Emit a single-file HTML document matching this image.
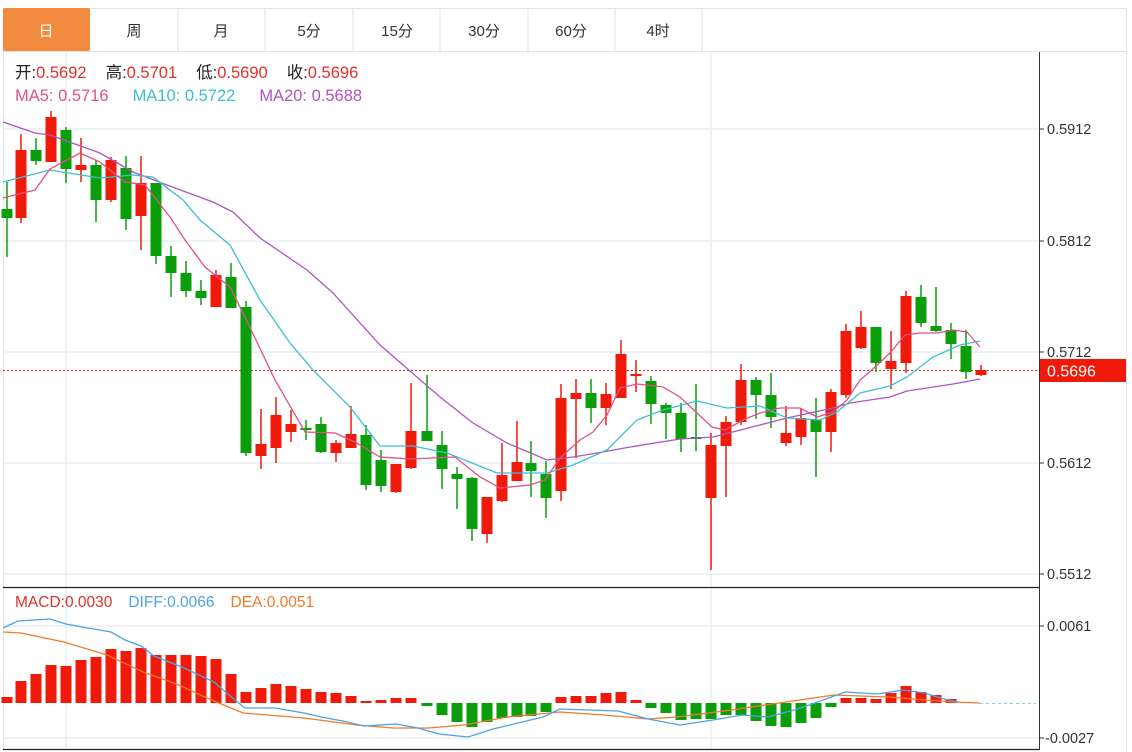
<!DOCTYPE html>
<html><head><meta charset="utf-8"><style>
body{margin:0;width:1132px;height:752px;background:#fff;overflow:hidden;font-family:"Liberation Sans","Noto Sans CJK SC",sans-serif}
svg{position:absolute;left:0;top:0}
</style></head><body>
<svg width="1132" height="752" viewBox="0 0 1132 752" font-family="Liberation Sans, Noto Sans CJK SC, sans-serif">
<rect x="3.5" y="8.5" width="1123" height="43" fill="#fff" stroke="#e2e2e2"/>
<rect x="3" y="8" width="87" height="43" rx="2" fill="#f18a3f"/>
<g stroke="#e2e2e2"><path d="M178 8V51M265 8V51M353 8V51M440 8V51M528 8V51M615 8V51M702 8V51"/></g>
<g font-size="15" text-anchor="middle" fill="#333">
<text x="46" y="36" fill="#fff">日</text><text x="134" y="36">周</text><text x="221" y="36">月</text><text x="309" y="36">5分</text><text x="397" y="36">15分</text><text x="484" y="36">30分</text><text x="571" y="36">60分</text><text x="658" y="36">4时</text>
</g>
<path d="M3.5 51V750M1126.5 51V750" stroke="#e6e6e6"/>
<g stroke="#e6edf2" stroke-width="1.5"><path d="M3 129H1039M3 241H1039M3 352H1039M3 463H1039M3 574H1039M3 626H1039M3 738H1039M66 52V750M711 52V750"/></g>
<path d="M1039.5 52V750" stroke="#333"/>
<path d="M3 587.5H1039M3 749.5H1039" stroke="#222" stroke-width="1.2"/>
<g stroke="#333"><path d="M1039 129H1044M1039 241H1044M1039 352H1044M1039 463H1044M1039 574H1044M1039 626H1044M1039 738H1044"/></g>
<g font-size="14.5" fill="#333"><text x="1047" y="134">0.5912</text><text x="1047" y="246">0.5812</text><text x="1047" y="357">0.5712</text><text x="1047" y="468">0.5612</text><text x="1047" y="579">0.5512</text><text x="1047" y="631">0.0061</text><text x="1045" y="743">-0.0027</text></g>
<g font-size="16.5"><text x="15" y="78"><tspan fill="#222">开:</tspan><tspan fill="#e0322a">0.5692</tspan><tspan fill="#222" dx="19">高:</tspan><tspan fill="#e0322a">0.5701</tspan><tspan fill="#222" dx="19">低:</tspan><tspan fill="#e0322a">0.5690</tspan><tspan fill="#222" dx="19">收:</tspan><tspan fill="#e0322a">0.5696</tspan></text>
<text x="15" y="101"><tspan fill="#e0508a">MA5: 0.5716</tspan><tspan fill="#3bbfd2" dx="24">MA10: 0.5722</tspan><tspan fill="#ad55c0" dx="24">MA20: 0.5688</tspan></text></g>
<g font-size="15.5"><text x="15" y="607"><tspan fill="#e0322a">MACD:0.0030</tspan><tspan fill="#4da2e6" dx="16">DIFF:0.0066</tspan><tspan fill="#f07a2a" dx="16">DEA:0.0051</tspan></text></g>
<path d="M3 370.5H1039" stroke="#e02020" stroke-dasharray="2 2"/>
<rect x="1040" y="359" width="86" height="23" fill="#f01a0a"/>
<text x="1047" y="376.5" font-size="16" fill="#fff">0.5696</text>
<g stroke="#f01a0a" stroke-width="1.5"><path d="M21 134V223M51 111V162M81 138V182M111 157V202M141 156V250M216 270V307M261 409V469M276 397V463M291 410V442M336 440V462M351 406V448M396 464V493M411 383V469M487 497V543M502 443V502M517 421V481M561 384V501M576 379V458M606 383V425M621 340V398M636 360V392M711 433V570M726 416V497M741 364V425M786 406V446M801 409V445M831 389V452M846 324V398M861 311V349M891 331V389M906 291V373M981 365V376"/></g>
<g fill="#f01a0a">
<rect x="15.5" y="150" width="11" height="68"/><rect x="45.5" y="117" width="11" height="45"/><rect x="75.5" y="165" width="11" height="5"/><rect x="105.5" y="160" width="11" height="40"/><rect x="135.5" y="183" width="11" height="33"/><rect x="210.5" y="275" width="11" height="32"/><rect x="255.5" y="444" width="11" height="12"/><rect x="270.5" y="415" width="11" height="33"/><rect x="285.5" y="424" width="11" height="8"/><rect x="330.5" y="443" width="11" height="10"/><rect x="345.5" y="434" width="11" height="14"/><rect x="390.5" y="464" width="11" height="28"/><rect x="405.5" y="431" width="11" height="37"/><rect x="481.5" y="497" width="11" height="37"/><rect x="496.5" y="475" width="11" height="26"/><rect x="511.5" y="462" width="11" height="19"/><rect x="555.5" y="398" width="11" height="93"/><rect x="570.5" y="393" width="11" height="6"/><rect x="600.5" y="394" width="11" height="14"/><rect x="615.5" y="354" width="11" height="44"/><rect x="630.5" y="374" width="11" height="2"/><rect x="705.5" y="445" width="11" height="53"/><rect x="720.5" y="422" width="11" height="24"/><rect x="735.5" y="380" width="11" height="42"/><rect x="780.5" y="433" width="11" height="10"/><rect x="795.5" y="418" width="11" height="19"/><rect x="825.5" y="392" width="11" height="40"/><rect x="840.5" y="331" width="11" height="64"/><rect x="855.5" y="327" width="11" height="21"/><rect x="885.5" y="361" width="11" height="8"/><rect x="900.5" y="296" width="11" height="67"/><rect x="975.5" y="370" width="11" height="5"/>
</g>
<g stroke="#0a9f0a" stroke-width="1.5"><path d="M7 182V257M36 138V165M66 127V183M96 160V222M126 156V230M156 183V264M171 246V297M186 261V297M201 280V305M231 263V308M246 301V456M306 420V440M321 417V453M366 425V490M381 450V492M427 375V441M442 431V489M457 467V509M472 477V541M531 441V497M546 461V518M591 379V423M651 376V424M666 403V439M681 403V452M696 384V451M756 377V419M771 373V428M816 398V477M876 327V372M921 285V327M936 287V332M951 323V359M966 330V379"/></g>
<g fill="#0a9f0a">
<rect x="1.5" y="209" width="11" height="9"/><rect x="30.5" y="150" width="11" height="11"/><rect x="60.5" y="130" width="11" height="39"/><rect x="90.5" y="165" width="11" height="35"/><rect x="120.5" y="168" width="11" height="51"/><rect x="150.5" y="183" width="11" height="73"/><rect x="165.5" y="256" width="11" height="17"/><rect x="180.5" y="273" width="11" height="18"/><rect x="195.5" y="291" width="11" height="7"/><rect x="225.5" y="277" width="11" height="31"/><rect x="240.5" y="307" width="11" height="146"/><rect x="300.5" y="428" width="11" height="2"/><rect x="315.5" y="424" width="11" height="28"/><rect x="360.5" y="435" width="11" height="50"/><rect x="375.5" y="460" width="11" height="26"/><rect x="421.5" y="431" width="11" height="10"/><rect x="436.5" y="445" width="11" height="24"/><rect x="451.5" y="474" width="11" height="5"/><rect x="466.5" y="478" width="11" height="51"/><rect x="525.5" y="463" width="11" height="8"/><rect x="540.5" y="474" width="11" height="24"/><rect x="585.5" y="393" width="11" height="15"/><rect x="645.5" y="381" width="11" height="23"/><rect x="660.5" y="405" width="11" height="8"/><rect x="675.5" y="413" width="11" height="26"/><rect x="690.5" y="437" width="11" height="2"/><rect x="750.5" y="380" width="11" height="15"/><rect x="765.5" y="395" width="11" height="22"/><rect x="810.5" y="420" width="11" height="12"/><rect x="870.5" y="327" width="11" height="36"/><rect x="915.5" y="297" width="11" height="26"/><rect x="930.5" y="326" width="11" height="5"/><rect x="945.5" y="330" width="11" height="14"/><rect x="960.5" y="346" width="11" height="26"/>
</g>
<g fill="none" stroke-width="1.3">
<polyline stroke="#ad55c0" points="3,122 35,133 50,135 100,153 133,172 167,185 213,202 233,212 260,238 307,270 333,293 380,345 440,397 473,423 507,443 547,460 573,457 597,453 630,447 680,439 713,437 760,425 787,418 833,408 850,403 890,397 907,391 927,388 953,384 980,379"/>
<polyline stroke="#3bbfd2" points="3,182 50,170 100,178 133,175 153,177 183,200 200,220 230,245 260,300 290,343 313,370 350,407 380,446 413,446 447,453 497,473 547,473 573,465 607,450 637,420 663,410 697,401 727,408 760,406 787,418 820,420 837,412 860,393 890,386 907,377 933,357 960,345 980,341"/>
<polyline stroke="#e0508a" points="3,198 35,190 50,169 80,153 100,162 125,182 145,185 170,217 185,240 205,267 230,287 245,317 275,380 305,432 335,433 355,442 380,457 410,459 455,457 480,477 500,488 530,485 545,480 560,458 580,440 593,432 607,415 620,388 637,384 663,387 680,397 697,413 712,427 725,430 743,420 760,413 780,408 800,408 817,417 833,412 847,400 860,380 873,369 890,353 905,335 920,333 937,333 953,330 967,332 980,347"/>
</g>
<g fill="#f01a0a">
<rect x="1.5" y="697" width="11" height="6"/><rect x="15.5" y="681" width="11" height="22"/><rect x="30.5" y="674" width="11" height="29"/><rect x="45.5" y="665" width="11" height="38"/><rect x="60.5" y="666" width="11" height="37"/><rect x="75.5" y="660" width="11" height="43"/><rect x="90.5" y="657" width="11" height="46"/><rect x="105.5" y="649" width="11" height="54"/><rect x="120.5" y="651" width="11" height="52"/><rect x="135.5" y="648" width="11" height="55"/><rect x="150.5" y="655" width="11" height="48"/><rect x="165.5" y="655" width="11" height="48"/><rect x="180.5" y="655" width="11" height="48"/><rect x="195.5" y="656" width="11" height="47"/><rect x="210.5" y="659" width="11" height="44"/><rect x="225.5" y="674" width="11" height="29"/><rect x="240.5" y="692" width="11" height="11"/><rect x="255.5" y="688" width="11" height="15"/><rect x="270.5" y="684" width="11" height="19"/><rect x="285.5" y="686" width="11" height="17"/><rect x="300.5" y="689" width="11" height="14"/><rect x="315.5" y="692" width="11" height="11"/><rect x="330.5" y="693" width="11" height="10"/><rect x="345.5" y="696" width="11" height="7"/><rect x="360.5" y="701" width="11" height="2"/><rect x="375.5" y="700" width="11" height="3"/><rect x="390.5" y="698" width="11" height="5"/><rect x="405.5" y="698" width="11" height="5"/>
<rect x="555.5" y="697" width="11" height="6"/><rect x="570.5" y="696" width="11" height="7"/><rect x="585.5" y="696" width="11" height="7"/><rect x="600.5" y="693" width="11" height="10"/><rect x="615.5" y="692" width="11" height="11"/><rect x="630.5" y="700" width="11" height="3"/>
<rect x="840.5" y="698" width="11" height="5"/><rect x="855.5" y="698" width="11" height="5"/><rect x="870.5" y="699" width="11" height="4"/><rect x="885.5" y="693" width="11" height="10"/><rect x="900.5" y="686" width="11" height="17"/><rect x="915.5" y="692" width="11" height="11"/><rect x="930.5" y="695" width="11" height="8"/><rect x="945.5" y="699" width="11" height="4"/>
</g>
<g fill="#0a9f0a">
<rect x="421.5" y="703" width="11" height="3"/><rect x="436.5" y="703" width="11" height="12"/><rect x="451.5" y="703" width="11" height="19"/><rect x="466.5" y="703" width="11" height="24"/><rect x="481.5" y="703" width="11" height="19"/><rect x="496.5" y="703" width="11" height="15"/><rect x="511.5" y="703" width="11" height="14"/><rect x="525.5" y="703" width="11" height="13"/><rect x="540.5" y="703" width="11" height="9"/>
<rect x="645.5" y="703" width="11" height="5"/><rect x="660.5" y="703" width="11" height="10"/><rect x="675.5" y="703" width="11" height="17"/><rect x="690.5" y="703" width="11" height="16"/><rect x="705.5" y="703" width="11" height="16"/><rect x="720.5" y="703" width="11" height="12"/><rect x="735.5" y="703" width="11" height="12"/><rect x="750.5" y="703" width="11" height="18"/><rect x="765.5" y="703" width="11" height="23"/><rect x="780.5" y="703" width="11" height="24"/><rect x="795.5" y="703" width="11" height="20"/><rect x="810.5" y="703" width="11" height="15"/><rect x="825.5" y="703" width="11" height="4"/>
</g>
<path d="M980 703.5H1036" stroke="#8cc8e8" stroke-dasharray="3 3"/>
<g fill="none" stroke-width="1.3">
<polyline stroke="#f07a2a" points="3,632 21,633 64,642 107,655 143,672 179,685 207,698 243,713 304,718 357,725 393,728 429,728 464,725 507,717 560,712 604,715 648,719 677,717 724,711 779,703 834,695 888,697 925,700 954,702 980,703"/>
<polyline stroke="#4da2e6" points="3,628 18,621 50,619 66,624 82,627 111,632 125,640 141,646 154,656 182,667 214,682 229,695 245,708 275,708 304,713 321,717 343,721 364,726 396,724 418,728 439,734 468,737 493,729 518,723 543,717 560,709 618,711 648,719 680,725 713,720 742,715 768,717 794,710 815,703 845,692 878,694 903,690 925,693 940,698 958,702"/>
</g>
</svg>
</body></html>
